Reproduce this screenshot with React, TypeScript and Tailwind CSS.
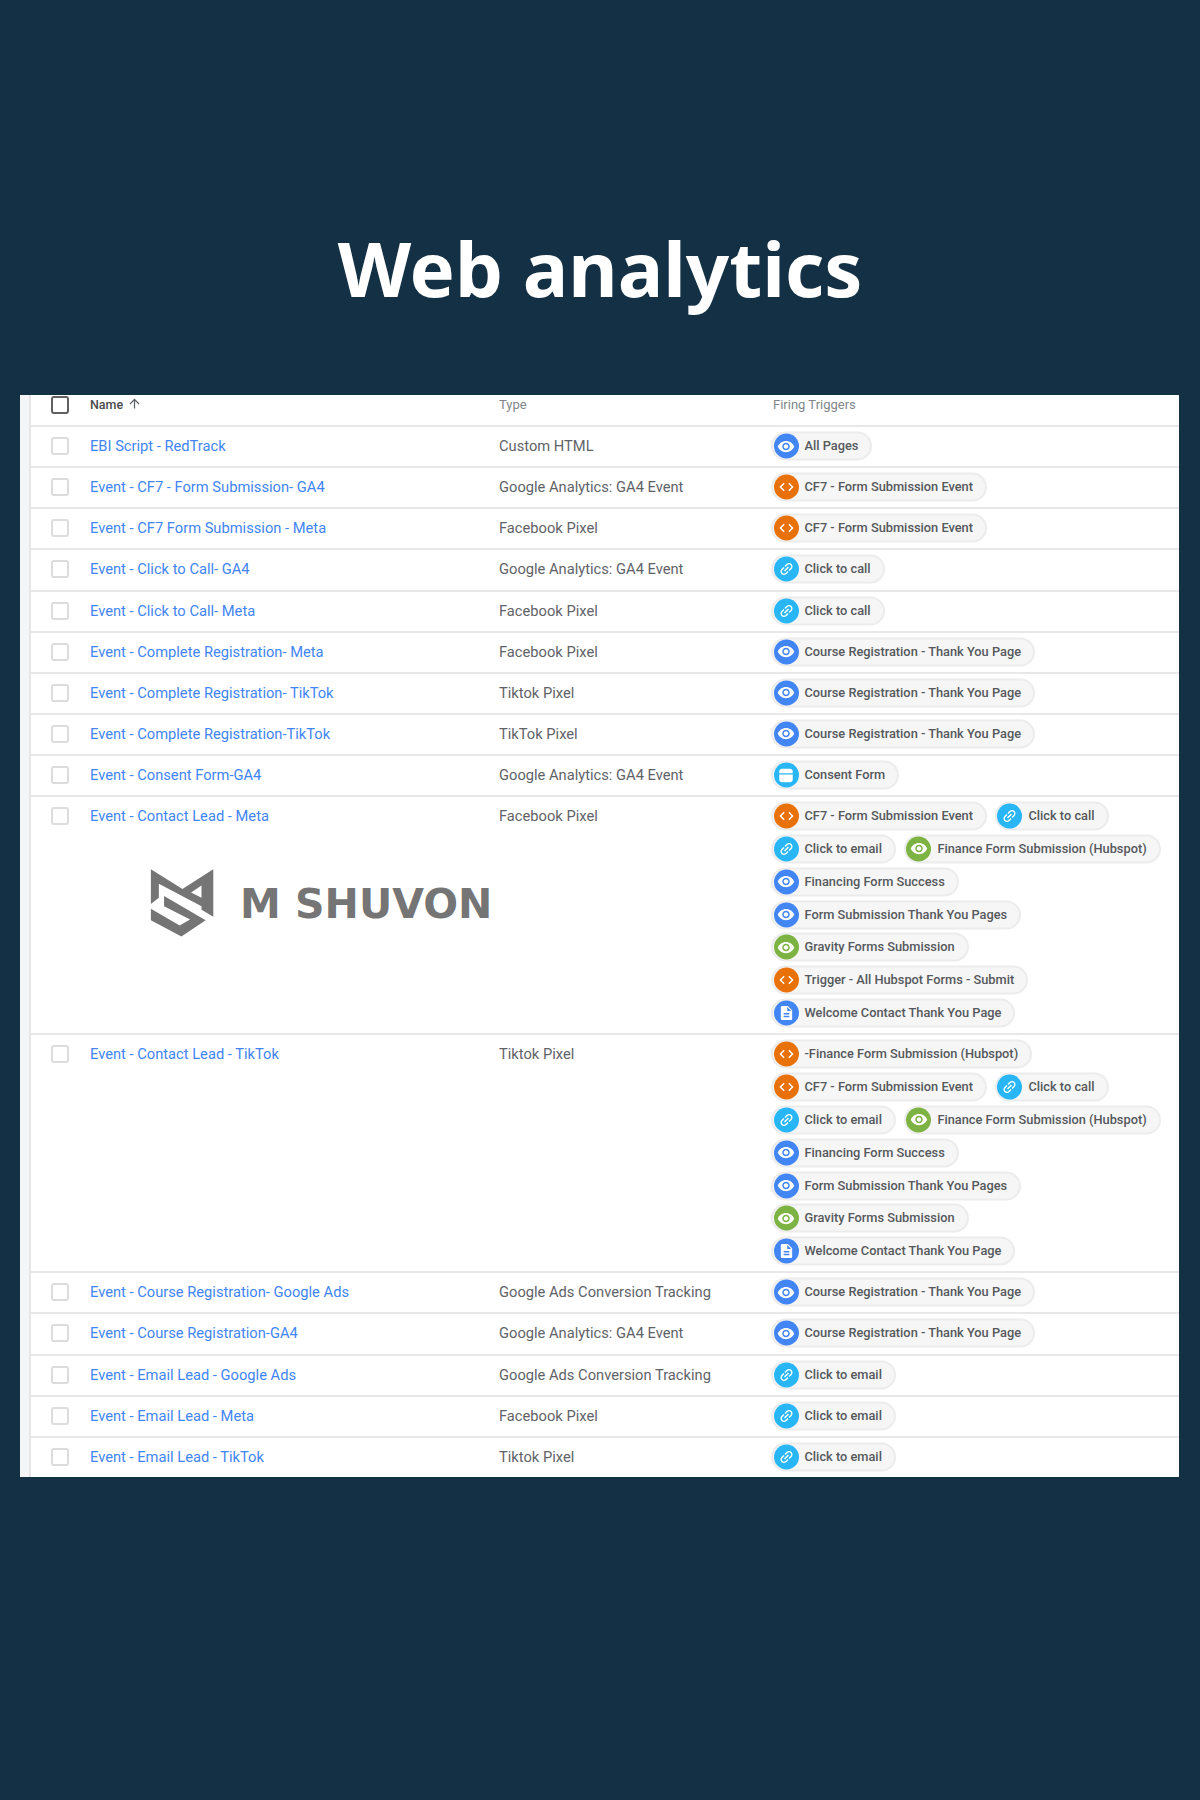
import React from "react";

type Kind = "eye" | "code" | "link" | "green" | "form" | "doc";

function TriggerIcon({ kind }: { kind: Kind }) {
  const bg =
    kind === "code"
      ? "bg-[#e8710a]"
      : kind === "link" || kind === "form"
        ? "bg-[#29b6f6]"
        : kind === "green"
          ? "bg-[#7cb342]"
          : "bg-[#4285f4]";
  return (
    <span className={`flex h-[25px] w-[25px] shrink-0 items-center justify-center rounded-full ${bg}`}>
      {(kind === "eye" || kind === "green") && (
        <svg viewBox="0 0 24 24" className="h-[18px] w-[18px]" fill="#fff">
          <path d="M12 4.5C7 4.5 2.73 7.61 1 12c1.73 4.39 6 7.5 11 7.5s9.27-3.11 11-7.5c-1.73-4.39-6-7.5-11-7.5zM12 17c-2.76 0-5-2.24-5-5s2.24-5 5-5 5 2.24 5 5-2.24 5-5 5zm0-8c-1.66 0-3 1.34-3 3s1.34 3 3 3 3-1.34 3-3-1.34-3-3-3z" />
        </svg>
      )}
      {kind === "code" && (
        <svg viewBox="0 0 24 24" className="h-[17px] w-[17px]" fill="#fff">
          <path d="M9.4 16.6L4.8 12l4.6-4.6L8 6l-6 6 6 6 1.4-1.4zm5.2 0l4.6-4.6-4.6-4.6L16 6l6 6-6 6-1.4-1.4z" />
        </svg>
      )}
      {kind === "link" && (
        <svg viewBox="0 0 24 24" className="h-[17px] w-[17px] -rotate-45" fill="#fff">
          <path d="M3.9 12c0-1.71 1.39-3.1 3.1-3.1h4V7H7c-2.76 0-5 2.24-5 5s2.24 5 5 5h4v-1.9H7c-1.71 0-3.1-1.39-3.1-3.1zM8 13h8v-2H8v2zm9-6h-4v1.9h4c1.71 0 3.1 1.39 3.1 3.1s-1.39 3.1-3.1 3.1h-4V17h4c2.76 0 5-2.24 5-5s-2.24-5-5-5z" />
        </svg>
      )}
      {kind === "form" && (
        <svg viewBox="0 0 24 24" className="h-[18px] w-[18px]" fill="#fff">
          <path d="M7 3h10a4 4 0 0 1 4 4v2H3V7a4 4 0 0 1 4-4zM3 10.6h18V17a4 4 0 0 1-4 4H7a4 4 0 0 1-4-4z" />
        </svg>
      )}
      {kind === "doc" && (
        <svg viewBox="0 0 24 24" className="h-[17px] w-[17px]" fill="#fff">
          <path d="M14 2H6c-1.1 0-2 .9-2 2v16c0 1.1.9 2 2 2h12c1.1 0 2-.9 2-2V8l-6-6zm2 16H8v-2h8v2zm0-4H8v-2h8v2zm-3-5V3.5L18.5 9H13z" />
        </svg>
      )}
    </span>
  );
}

function Chip({ kind, label }: { kind: Kind; label: string }) {
  return (
    <span className="flex h-[29px] items-center rounded-full border-2 border-[#ececec] bg-[#f6f6f6] pl-[0.5px] pr-[12px]">
      <TriggerIcon kind={kind} />
      <span className="ml-[6px] whitespace-nowrap text-[12.8px] leading-[25px] font-medium text-[#55585c] -translate-y-[1px]">
        {label}
      </span>
    </span>
  );
}

type Trigger = [Kind, string];

const cf7: Trigger = ["code", "CF7 - Form Submission Event"];
const call: Trigger = ["link", "Click to call"];
const email: Trigger = ["link", "Click to email"];
const course: Trigger = ["eye", "Course Registration - Thank You Page"];
const finance: Trigger = ["green", "Finance Form Submission (Hubspot)"];
const financing: Trigger = ["eye", "Financing Form Success"];
const thanks: Trigger = ["eye", "Form Submission Thank You Pages"];
const gravity: Trigger = ["green", "Gravity Forms Submission"];
const welcome: Trigger = ["doc", "Welcome Contact Thank You Page"];

const rows: { name: string; type: string; triggers: Trigger[]; logo?: boolean }[] = [
  { name: "EBI Script - RedTrack", type: "Custom HTML", triggers: [["eye", "All Pages"]] },
  { name: "Event - CF7 - Form Submission- GA4", type: "Google Analytics: GA4 Event", triggers: [cf7] },
  { name: "Event - CF7 Form Submission - Meta", type: "Facebook Pixel", triggers: [cf7] },
  { name: "Event - Click to Call- GA4", type: "Google Analytics: GA4 Event", triggers: [call] },
  { name: "Event - Click to Call- Meta", type: "Facebook Pixel", triggers: [call] },
  { name: "Event - Complete Registration- Meta", type: "Facebook Pixel", triggers: [course] },
  { name: "Event - Complete Registration- TikTok", type: "Tiktok Pixel", triggers: [course] },
  { name: "Event - Complete Registration-TikTok", type: "TikTok Pixel", triggers: [course] },
  { name: "Event - Consent Form-GA4", type: "Google Analytics: GA4 Event", triggers: [["form", "Consent Form"]] },
  {
    name: "Event - Contact Lead - Meta",
    type: "Facebook Pixel",
    logo: true,
    triggers: [cf7, call, email, finance, financing, thanks, gravity, ["code", "Trigger - All Hubspot Forms - Submit"], welcome],
  },
  {
    name: "Event - Contact Lead - TikTok",
    type: "Tiktok Pixel",
    triggers: [["code", "-Finance Form Submission (Hubspot)"], cf7, call, email, finance, financing, thanks, gravity, welcome],
  },
  { name: "Event - Course Registration- Google Ads", type: "Google Ads Conversion Tracking", triggers: [course] },
  { name: "Event - Course Registration-GA4", type: "Google Analytics: GA4 Event", triggers: [course] },
  { name: "Event - Email Lead - Google Ads", type: "Google Ads Conversion Tracking", triggers: [email] },
  { name: "Event - Email Lead - Meta", type: "Facebook Pixel", triggers: [email] },
  { name: "Event - Email Lead - TikTok", type: "Tiktok Pixel", triggers: [email] },
];

function Logo() {
  return (
    <div className="ml-[55px] mt-[32px] flex items-center">
      <svg viewBox="0 0 225 225" className="h-[78px] w-[78px]" fill="#757575">
        <polygon points="17,18 108,75 197,18 197,155 163,135 163,65 133,85 163,100 163,125 40,60 40,100 17,118" />
        <polygon points="55,95 175,165 105,212 17,165 17,132 100,180 130,163 55,125" />
      </svg>
      <span className="ml-[17px] translate-y-[2px] font-['DejaVu_Sans',sans-serif] text-[41px] leading-none font-bold whitespace-nowrap text-[#757575]">
        M SHUVON
      </span>
    </div>
  );
}

export default function App() {
  return (
    <div className="min-h-[1800px] bg-[#133044] font-['Roboto',sans-serif]">
      <h1 className="flex h-[395px] justify-center pt-[216px] font-['Noto_Sans',sans-serif] text-[76px] leading-[104px] font-bold text-white">
        Web analytics
      </h1>
      <div className="ml-[20px] flex w-[1159px] bg-white">
        <div className="w-[11px] border-r-2 border-[#e6e6e6] bg-[#f4f5f6]" />
        <div className="min-w-0 flex-1">
          <div className="grid h-[32px] grid-cols-[59px_409px_272px_1fr] items-start border-b-2 border-[#e8e8e8] pt-[1px]">
            <div className="pl-[20px]">
              <span className="block h-[18px] w-[18px] rounded-[3px] border-2 border-[#616161]" />
            </div>
            <div className="flex items-center text-[12.5px] leading-[18px] font-medium text-[#4a4a4a]">
              Name
              <svg viewBox="0 0 24 24" className="ml-[4px] h-[15px] w-[15px] -translate-y-[2px]" fill="#5f6368">
                <path d="M4 12l1.41 1.41L11 7.83V20h2V7.83l5.58 5.59L20 12l-8-8-8 8z" />
              </svg>
            </div>
            <div className="text-[13px] leading-[18px] text-[#80868b]">Type</div>
            <div className="ml-[2px] text-[13px] leading-[18px] text-[#80868b]">Firing Triggers</div>
          </div>
          {rows.map((r) => (
            <div
              key={r.name}
              className="grid grid-cols-[59px_409px_272px_1fr] border-b-2 border-[#e8e8e8] pt-[5px] pb-[5.14px] last:border-b-0 last:pb-[5.14px]"
            >
              <div className="pl-[20px] pt-[5px]">
                <span className="block h-[18px] w-[18px] rounded-[3px] border-2 border-[#dcdcdc]" />
              </div>
              <div className="flex flex-col">
                <span className="text-[14.7px] leading-[29px] text-[#4285f4]">{r.name}</span>
                {r.logo && <Logo />}
              </div>
              <div className="text-[14.7px] leading-[29px] text-[#5f6368]">{r.type}</div>
              <div className="flex -translate-y-[0.5px] flex-wrap gap-x-[8px] gap-y-[3.83px]">
                {r.triggers.map((t, i) => (
                  <Chip key={i} kind={t[0]} label={t[1]} />
                ))}
              </div>
            </div>
          ))}
        </div>
      </div>
    </div>
  );
}
